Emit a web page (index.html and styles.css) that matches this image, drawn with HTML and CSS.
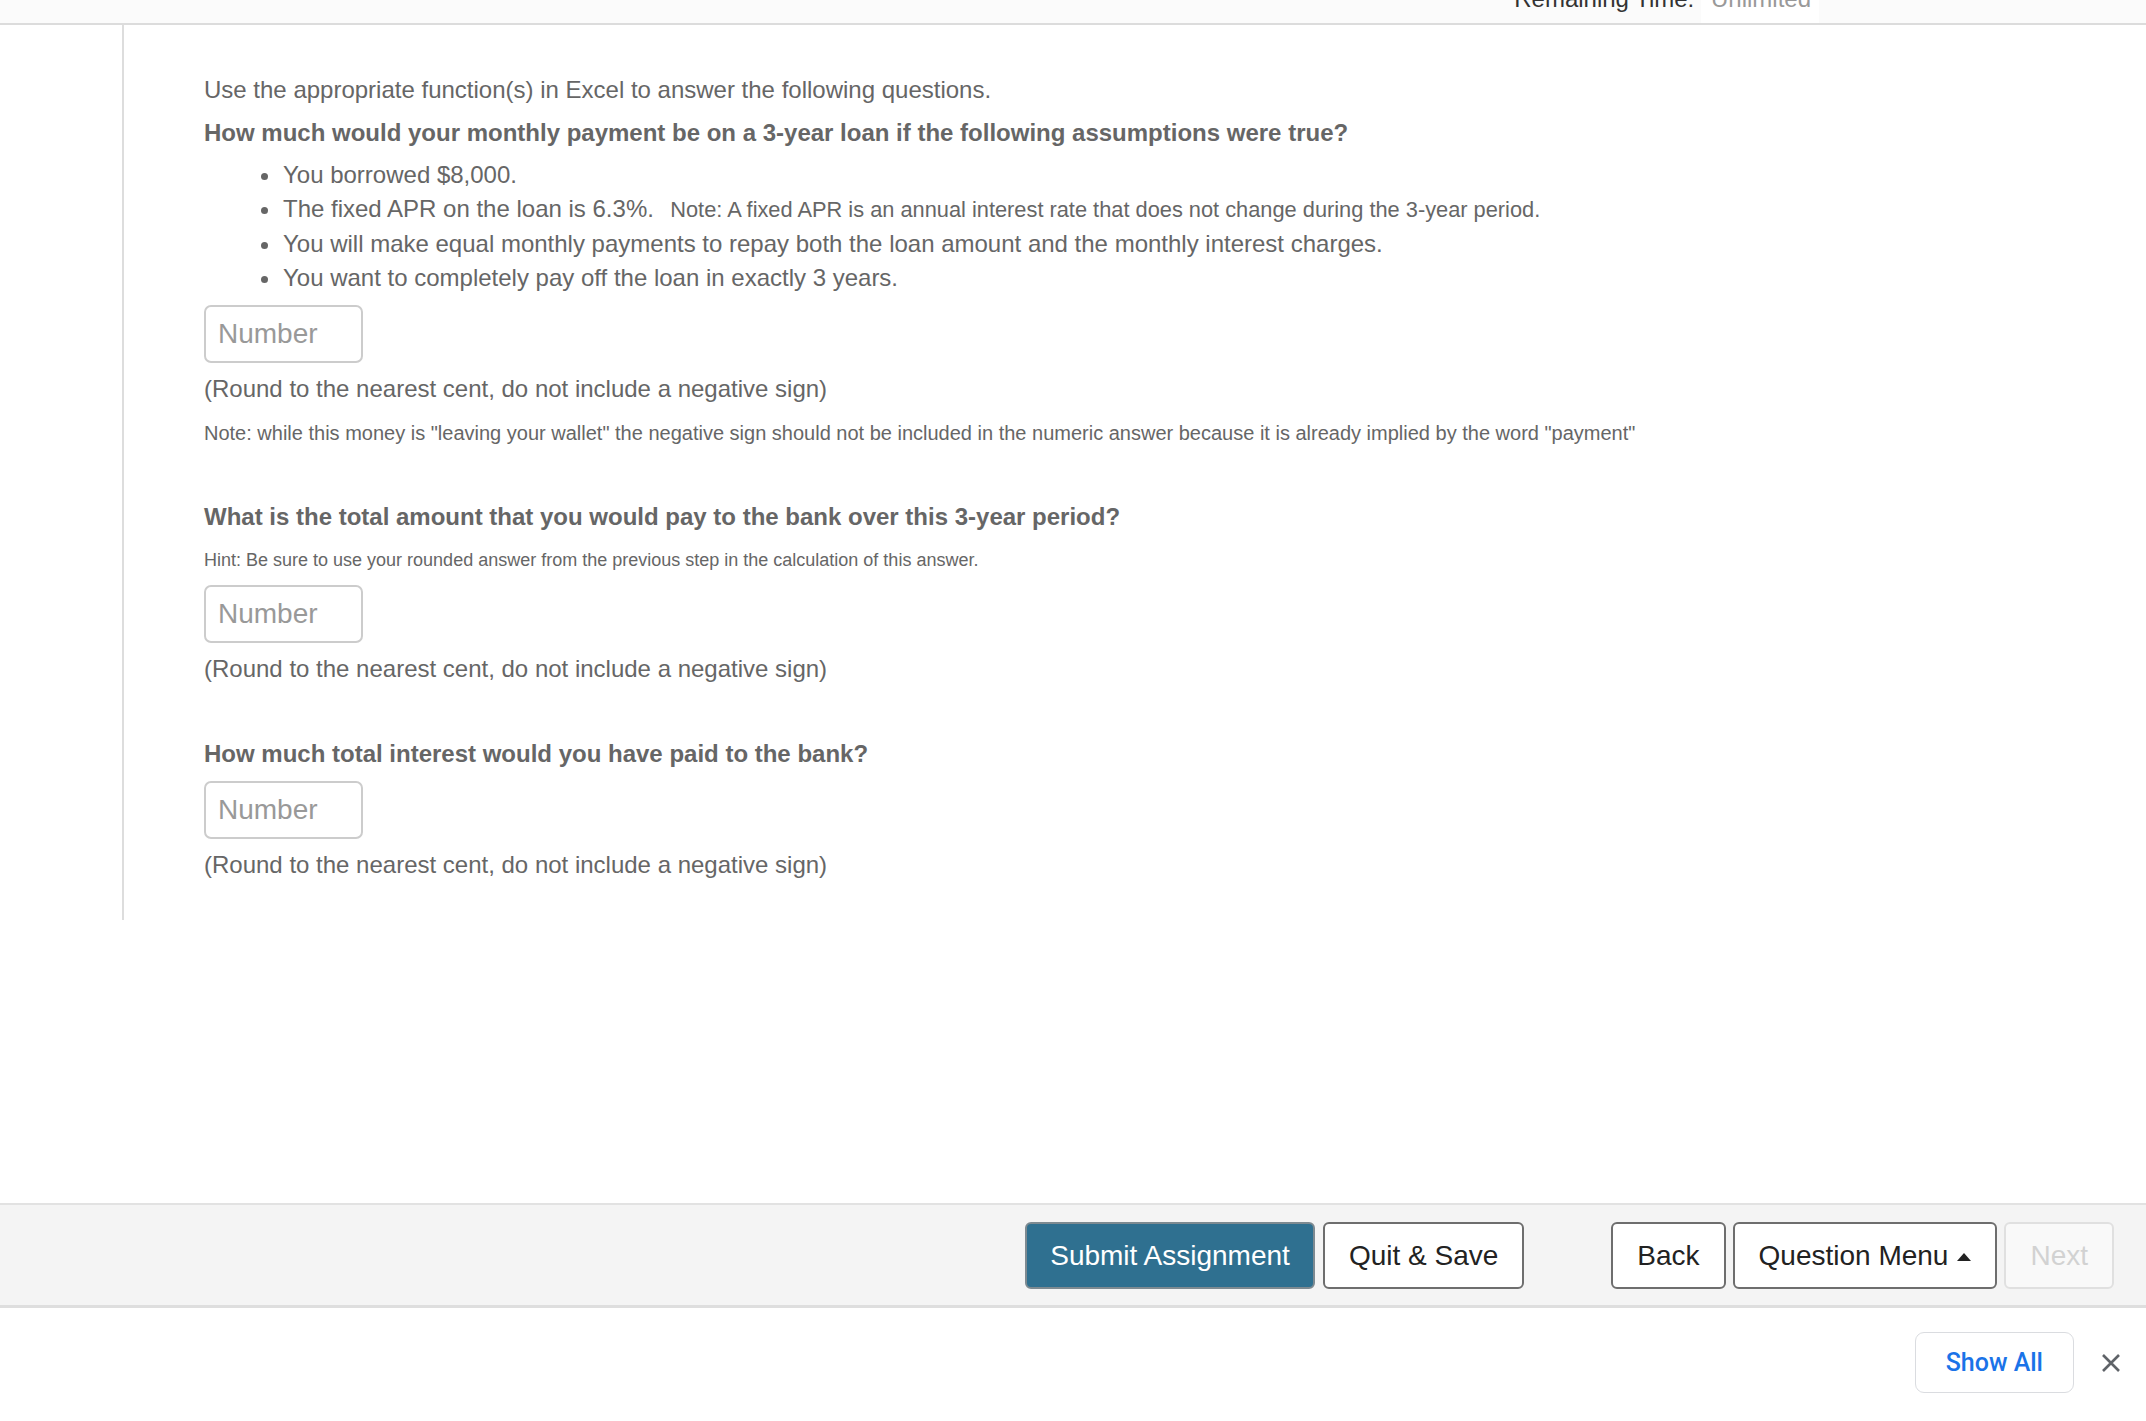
FILE: index.html
```html
<!DOCTYPE html>
<html lang="en">
<head>
<meta charset="utf-8">
<title>Assignment</title>
<link rel="stylesheet" href="styles.css">
</head>
<body>
<div class="app">
  <header class="topbar">
    <div class="timer"><span class="timer-label">Remaining Time:</span> <span class="timer-value">Unlimited</span></div>
  </header>

  <main class="workspace">
    <div class="page">
      <div class="gutter"></div>
      <section class="question">
        <p class="intro">Use the appropriate function(s) in Excel to answer the following questions.</p>
        <h2 class="prompt">How much would your monthly payment be on a 3-year loan if the following assumptions were true?</h2>
        <ul class="assumptions">
          <li>You borrowed $8,000.</li>
          <li>The fixed APR on the loan is 6.3%.&nbsp; <span class="aside">Note: A fixed APR is an annual interest rate that does not change during the 3-year period.</span></li>
          <li>You will make equal monthly payments to repay both the loan amount and the monthly interest charges.</li>
          <li>You want to completely pay off the loan in exactly 3 years.</li>
        </ul>
        <input class="answer" type="text" placeholder="Number">
        <p class="instruction">(Round to the nearest cent, do not include a negative sign)</p>
        <p class="fine">Note: while this money is "leaving your wallet" the negative sign should not be included in the numeric answer because it is already implied by the word "payment"</p>

        <h2 class="prompt prompt--second">What is the total amount that you would pay to the bank over this 3-year period?</h2>
        <p class="hint">Hint: Be sure to use your rounded answer from the previous step in the calculation of this answer.</p>
        <input class="answer answer--after-hint" type="text" placeholder="Number">
        <p class="instruction">(Round to the nearest cent, do not include a negative sign)</p>

        <h2 class="prompt prompt--third">How much total interest would you have paid to the bank?</h2>
        <input class="answer" type="text" placeholder="Number">
        <p class="instruction">(Round to the nearest cent, do not include a negative sign)</p>
      </section>
    </div>
  </main>

  <nav class="actionbar">
    <div class="btn-group">
      <button class="btn btn--primary" type="button">Submit Assignment</button>
      <button class="btn" type="button">Quit &amp; Save</button>
    </div>
    <div class="btn-group">
      <button class="btn" type="button">Back</button>
      <button class="btn" type="button">Question Menu<span class="caret"></span></button>
      <button class="btn btn--disabled" type="button" disabled>Next</button>
    </div>
  </nav>

  <div class="downloads">
    <button class="show-all" type="button">Show All</button>
    <button class="close" type="button" aria-label="Close">
      <svg width="20" height="20" viewBox="0 0 20 20" aria-hidden="true"><path d="M2 2 L18 18 M18 2 L2 18" stroke="#5f6368" stroke-width="2.6" stroke-linecap="butt" fill="none"/></svg>
    </button>
  </div>
</div>
</body>
</html>
```

FILE: styles.css
```css
* { box-sizing: border-box; }

html, body {
  margin: 0;
  padding: 0;
  background: #ffffff;
}

body {
  font-family: "Liberation Sans", Arial, Helvetica, sans-serif;
  color: #666666;
}

.app {
  display: flex;
  flex-direction: column;
  height: 100vh;
  overflow: hidden;
}

/* ---------- top bar ---------- */
.topbar {
  flex: none;
  height: 25px;
  background: #fbfbfb;
  border-bottom: 2px solid #dcdcdc;
  overflow: hidden;
  display: flex;
  justify-content: flex-end;
  padding-right: 327px;
}

.timer {
  margin-top: -15px;
  font-size: 24px;
  line-height: 28px;
  white-space: nowrap;
}

.timer-label { color: #333333; }

.timer-value {
  display: inline-block;
  background: #ffffff;
  color: #999999;
  padding: 0 8px 10px 10px;
}

/* ---------- question area ---------- */
.workspace {
  flex: 1 1 auto;
  min-height: 0;
  overflow: hidden;
}

.page {
  display: flex;
}

.gutter {
  flex: none;
  width: 122px;
}

.question {
  flex: 1;
  border-left: 2px solid #dddddd;
  padding: 48px 0 38px 80px;
}

.intro,
.instruction {
  margin: 0;
  font-size: 24px;
  line-height: 34px;
}

.prompt {
  margin: 9px 0 0;
  font-size: 24px;
  line-height: 34px;
  font-weight: bold;
  color: #666666;
}

.prompt--second { margin-top: 53px; }
.prompt--third { margin-top: 51px; }

.assumptions {
  list-style: none;
  margin: 8px 0 0;
  padding: 0 0 0 79px;
  font-size: 24px;
  line-height: 34px;
}

.assumptions li::before {
  content: "";
  display: inline-block;
  width: 7px;
  height: 7px;
  border-radius: 50%;
  background: #666666;
  margin-left: -22px;
  margin-right: 15px;
  vertical-align: 3px;
}

.aside {
  font-size: 21.8px;
  margin-left: 3px;
}

.answer {
  display: block;
  width: 159px;
  height: 58px;
  margin: 10px 0 0;
  padding: 0 0 0 12px;
  border: 2px solid #cccccc;
  border-radius: 7px;
  background: #ffffff;
  font-family: "Liberation Sans", Arial, Helvetica, sans-serif;
  font-size: 28px;
  color: #333333;
  outline: none;
}

.answer::placeholder { color: #999999; }

.answer--after-hint { margin-top: 12px; }

.instruction { margin-top: 9px; }

.fine {
  margin: 13px 0 0;
  font-size: 20px;
  line-height: 28px;
}

.hint {
  margin: 13px 0 0;
  font-size: 18px;
  line-height: 26px;
}

/* ---------- action bar ---------- */
.actionbar {
  flex: none;
  height: 102px;
  background: #f4f4f4;
  border-top: 2px solid #e2e2e2;
  display: flex;
  justify-content: flex-end;
  align-items: center;
  gap: 87px;
  padding-right: 32px;
}

.btn-group {
  display: flex;
  gap: 7px;
}

.btn-group:first-child { gap: 8px; }

.btn {
  height: 67px;
  padding: 0 24px;
  border: 2px solid #6e6e6e;
  border-radius: 6px;
  background: #ffffff;
  color: #222222;
  font-family: "Liberation Sans", Arial, Helvetica, sans-serif;
  font-size: 28px;
  line-height: 63px;
  white-space: nowrap;
}

.btn--primary {
  background: #2f7090;
  border-color: #7d8a91;
  color: #ffffff;
  padding: 0 23px;
}

.btn--disabled {
  background: #f9f9f9;
  border-color: #e0e0e0;
  color: #d2d2d2;
}

.caret {
  display: inline-block;
  width: 0;
  height: 0;
  margin-left: 9px;
  border-left: 7px solid transparent;
  border-right: 7px solid transparent;
  border-bottom: 8px solid #222222;
  vertical-align: middle;
}

/* ---------- downloads bar ---------- */
.downloads {
  flex: none;
  height: 116px;
  background: #ffffff;
  border-top: 3px solid #dedede;
  display: flex;
  justify-content: flex-end;
  align-items: center;
  gap: 27px;
  padding: 0 25px 4px 0;
}

.show-all {
  height: 61px;
  padding: 0 30px;
  border: 1px solid #dadce0;
  border-radius: 9px;
  background: #ffffff;
  color: #1a73e8;
  font-family: Roboto, "Liberation Sans", Arial, sans-serif;
  font-weight: 500;
  font-size: 25px;
}

.close {
  width: 20px;
  height: 20px;
  padding: 0;
  border: none;
  background: transparent;
  display: flex;
}
```
